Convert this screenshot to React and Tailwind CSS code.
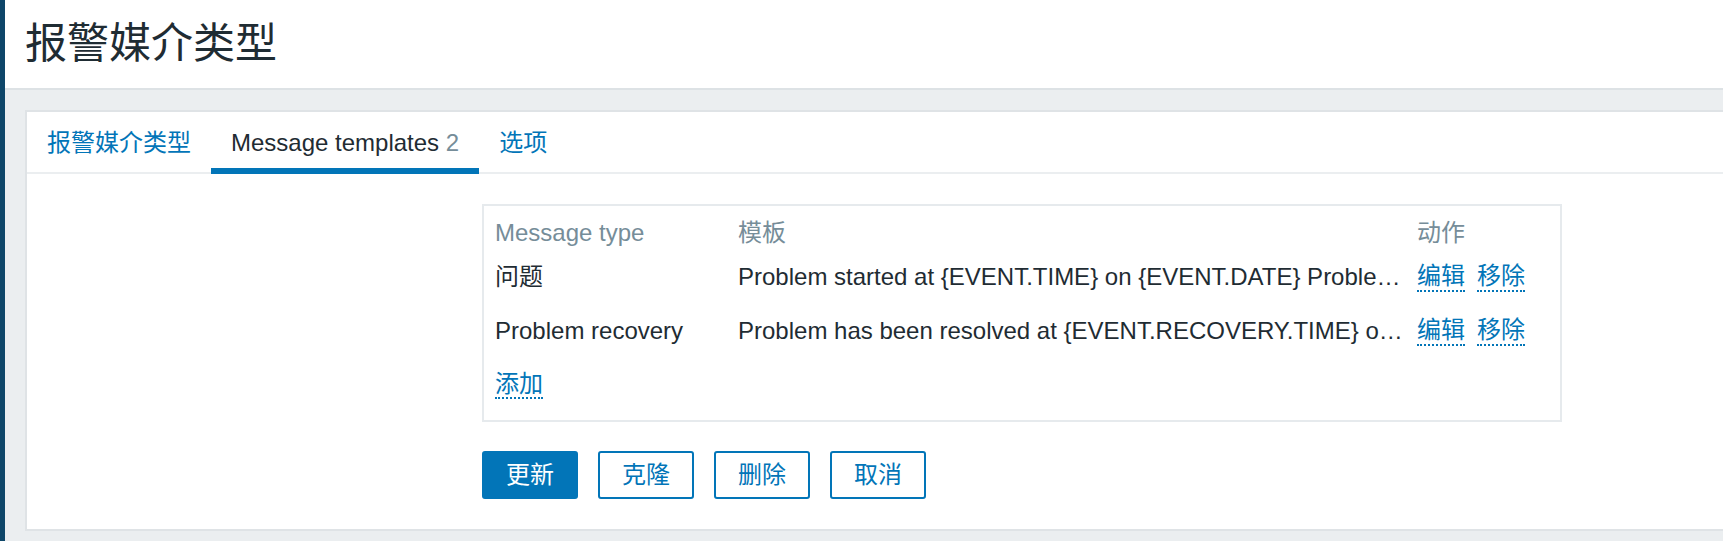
import React from "react";

const templates = [
  {
    id: 1,
    type: "问题",
    text: "Problem started at {EVENT.TIME} on {EVENT.DATE} Problem name: {EVENT.NAME} Host: {HOST.NAME} Severity: {EVENT.SEVERITY}",
  },
  {
    id: 2,
    type: "Problem recovery",
    text: "Problem has been resolved at {EVENT.RECOVERY.TIME} on {EVENT.RECOVERY.DATE} Problem name: {EVENT.NAME} Problem duration: {EVENT.DURATION}",
  },
];

function Tabs() {
  return (
    <div className="flex h-[62px] border-b-2 border-[#ebeef0]">
      <div className="px-[20px] pt-[17px] pb-[11px] leading-[28px] text-[#0275b8] border-b-[6px] border-transparent -mb-[2px] box-border h-[62px]">
        报警媒介类型
      </div>
      <div className="px-[20px] pt-[17px] pb-[11px] leading-[28px] text-[#1f2c33] border-b-[6px] border-[#0275b8] -mb-[2px] box-border h-[62px]">
        Message templates <span className="text-[#768d99]">2</span>
      </div>
      <div className="px-[20px] pt-[17px] pb-[11px] leading-[28px] text-[#0275b8] border-b-[6px] border-transparent -mb-[2px] box-border h-[62px]">
        选项
      </div>
    </div>
  );
}

function TemplateTable() {
  return (
    <div className="w-[1080px] border-2 border-[#e6eaed] pl-[11px] pt-[10px] pb-[8px]">
      <div className="grid grid-cols-[243px_679px_1fr] h-[34px] items-center leading-[28px] text-[#768d99]">
        <span>Message type</span>
        <span>模板</span>
        <span>动作</span>
      </div>
      {templates.map((t) => (
        <div
          key={t.id}
          className="grid grid-cols-[243px_679px_1fr] h-[54px] items-center leading-[28px] text-[#1f2c33]"
        >
          <span>{t.type}</span>
          <span className="truncate pr-[12px]">{t.text}</span>
          <div className="flex gap-[12px] text-[#0275b8]">
            <span className="border-b-2 border-dotted border-[#0275b8] leading-[28px]">编辑</span>
            <span className="border-b-2 border-dotted border-[#0275b8] leading-[28px]">移除</span>
          </div>
        </div>
      ))}
      <div className="h-[54px] flex items-center">
        <span className="text-[#0275b8] border-b-2 border-dotted border-[#0275b8] leading-[26px]">
          添加
        </span>
      </div>
    </div>
  );
}

function Buttons() {
  return (
    <div className="flex gap-[20px] mt-[29px]">
      <button className="w-[96px] h-[48px] rounded-[3px] bg-[#0275b8] border-2 border-[#0275b8] text-white">
        更新
      </button>
      {["克隆", "删除", "取消"].map((label) => (
        <button
          key={label}
          className="w-[96px] h-[48px] rounded-[3px] bg-white border-2 border-[#0275b8] text-[#0275b8]"
        >
          {label}
        </button>
      ))}
    </div>
  );
}

export default function App() {
  return (
    <div className="flex h-[541px] overflow-hidden bg-[#ebeef0] font-['Liberation_Sans','Noto_Sans_CJK_SC',sans-serif] text-[24px] text-[#1f2c33]">
      <div className="w-[5px] shrink-0 bg-[#0e4669]" />
      <div className="flex-1 flex flex-col">
        <header className="h-[90px] shrink-0 bg-white border-b-2 border-[#dde2e5] flex items-center pl-[20px]">
          <h1 className="text-[42px] leading-[50px] text-[#1f2c33]">报警媒介类型</h1>
        </header>
        <div className="pt-[20px] pl-[20px]">
          <div className="bg-white border-2 border-r-0 border-[#dfe3e6] pb-[30px]">
            <Tabs />
            <div className="flex pt-[30px]">
              <div className="w-[455px] shrink-0" />
              <div className="flex flex-col">
                <TemplateTable />
                <Buttons />
              </div>
            </div>
          </div>
        </div>
      </div>
    </div>
  );
}
